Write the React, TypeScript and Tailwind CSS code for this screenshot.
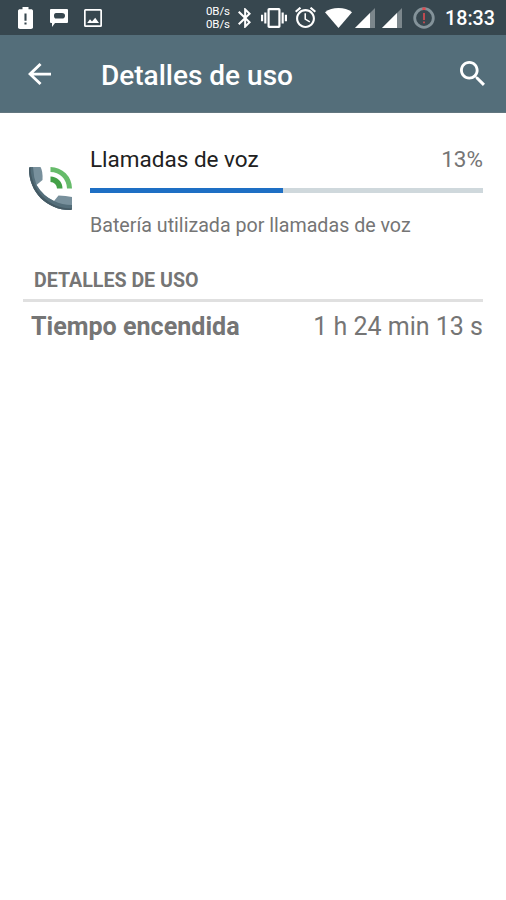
import type { ReactNode } from "react";

function Glyph({
  width,
  height,
  viewBox,
  className,
  children,
}: {
  width: number;
  height: number;
  viewBox: string;
  className?: string;
  children: ReactNode;
}) {
  return (
    <svg
      width={width}
      height={height}
      viewBox={viewBox}
      preserveAspectRatio="none"
      fill="currentColor"
      aria-hidden="true"
      className={`shrink-0 ${className ?? ""}`}
    >
      {children}
    </svg>
  );
}

function SignalIcon({ className }: { className?: string }) {
  return (
    <Glyph width={20} height={20} viewBox="0 0 20 20" className={className}>
      <path d="M0 20 20 0V20Z" fillOpacity=".35" />
      <path d="M0 20 15 5V20Z" />
    </Glyph>
  );
}

function StatusBar() {
  return (
    <div className="flex h-[35px] items-center bg-[#37474f] pl-[18px] text-white">
      <Glyph width={15} height={22} viewBox="7 2 10 20">
        <path d="M15.67 4H14V2h-4v2H8.33C7.6 4 7 4.6 7 5.33v15.33C7 21.4 7.6 22 8.33 22h7.33c.74 0 1.34-.6 1.34-1.33V5.33C17 4.6 16.4 4 15.67 4zM12.7 18h-1.4v-2h1.4zm0-3.5h-1.4V8h1.4z" />
      </Glyph>
      <Glyph width={18} height={18} viewBox="0 0 18 18" className="ml-[17px]">
        <path
          fillRule="evenodd"
          d="M1 0H17Q18 0 18 1V13Q18 14 17 14H5L2 18V14H1Q0 14 0 13V1Q0 0 1 0ZM6 4Q4 4 4 6.8T6 9.6H12Q15 9.6 15 6.8T12 4Z"
        />
      </Glyph>
      <Glyph width={18} height={18} viewBox="0 0 18 18" className="ml-4">
        <path
          fillRule="evenodd"
          d="M1.5 0H16.5Q18 0 18 1.5V16.5Q18 18 16.5 18H1.5Q0 18 0 16.5V1.5Q0 0 1.5 0ZM1.7 1.7V16.3H16.3V1.7Z"
        />
        <path d="M3.2 14 6 10.2 8 12.4 11.2 8.8 15 14Z" />
      </Glyph>

      <div className="ml-[104px] mt-px w-[25px] text-[11.5px] leading-[13px] tracking-[-0.1px]">
        <p>0B/s</p>
        <p>0B/s</p>
      </div>
      <Glyph width={13} height={20} viewBox="5 2 12.71 20" className="ml-[7px]">
        <path d="M17.71 7.71 12 2h-1v7.59L6.41 5 5 6.41 10.59 12 5 17.59 6.41 19 11 14.41V22h1l5.71-5.71-4.3-4.29 4.3-4.29zM13 5.83l1.88 1.88L13 9.59V5.83zm1.88 10.46L13 18.17v-3.76l1.88 1.88z" />
      </Glyph>
      <Glyph width={26} height={20} viewBox="0 3 24 18" className="ml-[10px]">
        <path d="M0 15h2V9H0v6zm3 2h2V7H3v10zm19-8v6h2V9h-2zm-3 8h2V7h-2v10zM16.5 3h-9C6.67 3 6 3.67 6 4.5v15c0 .83.67 1.5 1.5 1.5h9c.83 0 1.5-.67 1.5-1.5v-15c0-.83-.67-1.5-1.5-1.5zM16 19H8V5h8v14z" />
      </Glyph>
      <Glyph width={21} height={21} viewBox="2 2 20 20" className="ml-[8px]">
        <path d="m22 5.72-4.6-3.86-1.29 1.53 4.6 3.86L22 5.72zM7.88 3.39 6.6 1.86 2 5.71l1.29 1.53 4.59-3.85zM12.5 8H11v6l4.75 2.85.75-1.23-4-2.37V8zM12 4c-4.97 0-9 4.03-9 9s4.02 9 9 9c4.97 0 9-4.03 9-9s-4.03-9-9-9zm0 16c-3.87 0-7-3.13-7-7s3.13-7 7-7 7 3.13 7 7-3.13 7-7 7z" />
      </Glyph>
      <Glyph width={27} height={20} viewBox="0 0 27 20" className="ml-[9px]">
        <path d="M13.5 20 0 4.2Q5.6 0 13.5 0T27 4.2Z" />
      </Glyph>
      <SignalIcon className="ml-[3px]" />
      <SignalIcon className="ml-[7px]" />
      <Glyph width={22} height={22} viewBox="0 0 22 22" className="ml-[11px]">
        <circle cx="11" cy="11" r="9.3" fill="none" stroke="#84939a" strokeWidth="2.8" />
        <path d="M9.4 .4H12.6V3H9.4ZM10.2 6H11.8V13H10.2ZM10.2 14.4H11.8V16.2H10.2Z" fill="#df4b50" />
      </Glyph>
      <span className="ml-[10px] mt-[2px] text-[19.7px] leading-none font-medium">18:33</span>
    </div>
  );
}

function Toolbar() {
  return (
    <header className="flex h-[78px] items-center border-b border-[#62767f] bg-[#546e7a] pl-[28px] pr-[21px] text-white">
      <button type="button" aria-label="Atrás">
        <Glyph width={23} height={22} viewBox="4 4 16 16">
          <path d="M20 11H7.83l5.59-5.59L12 4l-8 8 8 8 1.41-1.41L7.83 13H20v-2z" />
        </Glyph>
      </button>
      <h1 className="ml-[50px] mt-[5px] text-[28px] leading-8 font-medium">Detalles de uso</h1>
      <button type="button" aria-label="Buscar" className="ml-auto">
        <Glyph width={25} height={25} viewBox="3 3 17.49 17.49">
          <path d="M15.5 14h-.79l-.28-.27C15.41 12.59 16 11.11 16 9.5 16 5.91 13.09 3 9.5 3S3 5.91 3 9.5 5.91 16 9.5 16c1.61 0 3.09-.59 4.23-1.57l.27.28v.79l5 4.99L20.49 19l-4.99-5zm-6 0C7.01 14 5 11.99 5 9.5S7.01 5 9.5 5 14 7.01 14 9.5 11.99 14 9.5 14z" />
        </Glyph>
      </button>
    </header>
  );
}

function CallIcon() {
  return (
    <Glyph width={43} height={43} viewBox="0 0 43 43" className="mt-[54px]">
      <path d="M1.5 0H11.5Q14 4 13.5 13L7.5 18Q14 29 25 34L29.5 28.5Q37 28.5 43 30V41.5Q43 43 41 43C18 43 0 25 0 2Q0 0 1.5 0Z" fill="#78909c" />
      <path d="M1.5 0H4Q4.5 10 7.5 18Q14 29 25 34Q33 38 43 38V41.5Q43 43 41 43C18 43 0 25 0 2Q0 0 1.5 0Z" fill="#546e7a" />
      <path d="M0 2C0 25 18 43 41 43Q43 43 43 41.5C20 41.5 2 24 1.5 0Q0 0 0 2Z" fill="#455a64" />
      <path d="M21.5 0A21.5 21.5 0 0 1 43 21.5H38A16.5 16.5 0 0 0 21.5 5Z" fill="#66bb6a" />
      <path d="M21.5 9.5A12 12 0 0 1 33.5 21.5H28A6.5 6.5 0 0 0 21.5 15Z" fill="#43a047" />
    </Glyph>
  );
}

export default function App() {
  return (
    <div className="min-h-screen bg-white font-[Roboto,sans-serif] text-[#757575]">
      <StatusBar />
      <Toolbar />

      <main className="pl-[23px] pr-[23px]">
        <section className="flex pl-[6px]">
          <CallIcon />
          <div className="ml-[18px] flex-1">
            <div className="mt-8 flex justify-between text-[22.5px] leading-7">
              <h2 className="text-[#212121]">Llamadas de voz</h2>
              <span>13%</span>
            </div>
            <div className="mt-[15px] h-[5px] bg-[#cfd8dc]">
              <div className="h-full w-[49%] bg-[#1e6fc4]" />
            </div>
            <p className="mt-[21px] text-[19.65px] leading-6">
              Batería utilizada por llamadas de voz
            </p>
          </div>
        </section>

        <h3 className="mt-[31px] border-b-[3px] border-[#e0e0e0] pb-[6px] pl-[11px] text-[19.6px] leading-6 font-bold">
          DETALLES DE USO
        </h3>
        <div className="mt-[9px] flex justify-between pl-2 leading-8">
          <span className="text-[25.1px] font-bold">Tiempo encendida</span>
          <span className="text-[25px]">1 h 24 min 13 s</span>
        </div>
      </main>
    </div>
  );
}
